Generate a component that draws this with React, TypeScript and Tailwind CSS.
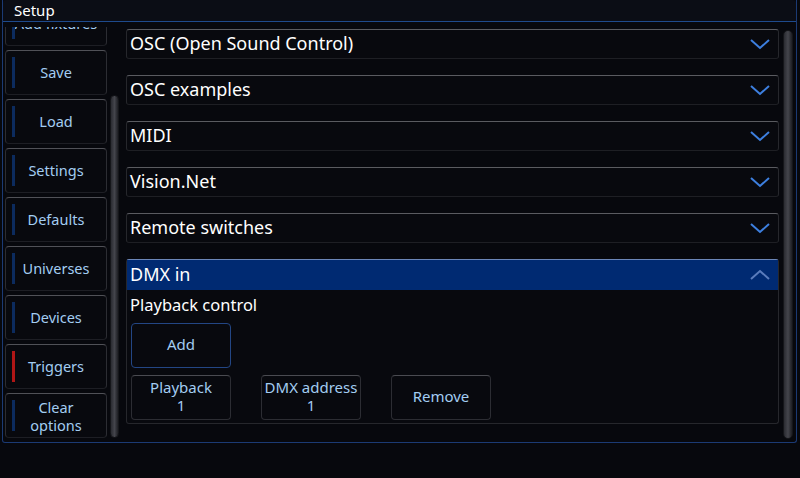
import React from "react";

const sideItems = [
  { label: "Add fixtures" },
  { label: "Save" },
  { label: "Load" },
  { label: "Settings" },
  { label: "Defaults" },
  { label: "Universes" },
  { label: "Devices" },
  { label: "Triggers", active: true },
  { label: "Clear options", twoLine: true },
];

const sections = ["OSC (Open Sound Control)", "OSC examples", "MIDI", "Vision.Net", "Remote switches"];

function Chevron({ up = false }: { up?: boolean }) {
  return (
    <svg width="22" height="12" viewBox="0 0 22 12" className="shrink-0">
      {up ? (
        <polyline points="2,10 11,2 20,10" fill="none" stroke="#5a7cbc" strokeWidth="2" />
      ) : (
        <polyline points="2,2 11,10 20,2" fill="none" stroke="#3d7fdf" strokeWidth="2" />
      )}
    </svg>
  );
}

function SideButton({ label, active, twoLine }: { label: string; active?: boolean; twoLine?: boolean }) {
  return (
    <div className="relative h-[45px] w-[102px] shrink-0 rounded-[4px] border border-[#2c2d33] border-t-[#505157] border-b-[#1d1e24] bg-[#08090e] flex items-center justify-center">
      <div className={"absolute left-[6px] top-[6px] bottom-[6px] w-[3px] " + (active ? "bg-[#b01616]" : "bg-[#0c2b5e]")} />
      <span className={"text-[14.5px] text-[#a3cdf2] text-center " + (twoLine ? "leading-[18px] w-[60px]" : "leading-none")}>
        {twoLine ? <>Clear<br />options</> : label}
      </span>
    </div>
  );
}

function ActionButton({ children, blue }: { children: React.ReactNode; blue?: boolean }) {
  return (
    <div className={"w-[100px] h-[45px] rounded-[4px] border bg-[#08090e] flex flex-col items-center justify-center pb-[3px] text-[15px] leading-[18px] text-[#a3cdf2] text-center " + (blue ? "border-[#234684]" : "border-[#2c2d33] border-t-[#4a4b51]")}>
      {children}
    </div>
  );
}

export default function App() {
  return (
    <div className="w-[800px] h-[478px] bg-[#07080d] overflow-hidden font-['Noto_Sans',sans-serif] text-white">
      <div className="ml-[2px] w-[795px] h-[443px] border-x border-b border-[#1b3a74] rounded-b-[3px] flex flex-col">
        <div className="h-[22px] shrink-0 border-b border-[#1e4a8c] bg-[#0b0d15] rounded-t-[3px] flex items-center px-[11px]">
          <span className="text-[15px] leading-none text-white">Setup</span>
        </div>
        <div className="flex flex-1 min-h-0">
          {/* sidebar, scrolled a little */}
          <div className="ml-[2px] w-[102px] mt-[5px] mb-[3px] overflow-hidden">
            <div className="-mt-[26px] flex flex-col gap-[4px]">
              {sideItems.map((s) => (
                <SideButton key={s.label} label={s.label} active={s.active} twoLine={s.twoLine} />
              ))}
            </div>
          </div>
          {/* left scrollbar */}
          <div className="ml-[3px] w-[9px] mt-[73px] mb-[4px] rounded-full bg-gradient-to-r from-[#2a2b31] via-[#44454c] to-[#1e1f24] border border-[#15161a]" />
          {/* content */}
          <div className="ml-[7px] w-[653px] pt-[7px] flex flex-col gap-[16px]">
            {sections.map((t) => (
              <div key={t} className="h-[30px] rounded-[3px] border border-[#26272c] border-t-[#5a5b60] border-b-[#1e1f24] bg-[#08090e] flex items-center justify-between pl-[3px] pr-[7px]">
                <span className="text-[18px] leading-none -mt-[2px]">{t}</span>
                <Chevron />
              </div>
            ))}
            <div className="h-[165px] rounded-[3px] border border-[#26272c] border-t-[#6b86b8] bg-[#08090e] flex flex-col">
              <div className="h-[30px] shrink-0 bg-[#002a72] flex items-center justify-between pl-[3px] pr-[7px]">
                <span className="text-[18px] leading-none -mt-[2px]">DMX in</span>
                <Chevron up />
              </div>
              <div className="pl-[3px] pt-[5px] text-[16.5px] leading-[20px]">Playback control</div>
              <div className="pl-[4px] pt-[8px] flex flex-col gap-[7px]">
                <ActionButton blue>Add</ActionButton>
                <div className="flex gap-[30px]">
                  <ActionButton>
                    <span>Playback</span>
                    <span>1</span>
                  </ActionButton>
                  <ActionButton>
                    <span>DMX address</span>
                    <span>1</span>
                  </ActionButton>
                  <ActionButton>Remove</ActionButton>
                </div>
              </div>
            </div>
          </div>
          {/* right scrollbar */}
          <div className="ml-[4px] w-[10px] mt-[8px] mb-[3px] rounded-full bg-gradient-to-r from-[#2a2b31] via-[#44454c] to-[#1e1f24] border border-[#15161a]" />
        </div>
      </div>
    </div>
  );
}
